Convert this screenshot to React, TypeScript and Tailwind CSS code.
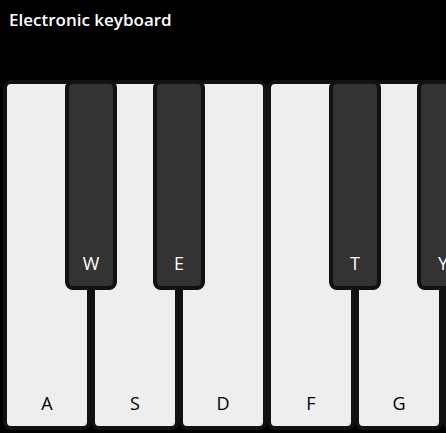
const whiteKeys = ["A", "S", "D", "F", "G", "H"];

const blackKeys = [
  { label: "W", left: "left-[62px]" },
  { label: "E", left: "left-[150px]" },
  { label: "T", left: "left-[326px]" },
  { label: "Y", left: "left-[414px]" },
];

export default function App() {
  return (
    <div className="w-[446px] h-[433px] overflow-hidden bg-black font-['Open_Sans',sans-serif]">
      {/* Header */}
      <div className="h-[80px] px-[9px] pt-[8px]">
        <h1 className="text-[17px] font-semibold text-white leading-[24px]">
          Electronic keyboard
        </h1>
      </div>

      {/* Keys */}
      <div className="relative ml-[3px] flex">
        {whiteKeys.map((key) => (
          <div
            key={key}
            className="shrink-0 w-[88px] h-[350px] border-4 border-[#111] rounded-lg bg-[#eee] flex items-end justify-center pb-[11px] text-[18px] leading-[24px] text-black"
          >
            {key}
          </div>
        ))}
        {blackKeys.map((key) => (
          <div
            key={key.label}
            className={`absolute top-0 ${key.left} w-[52px] h-[210px] border-4 border-[#111] rounded-lg bg-[#333] flex items-end justify-center pb-[11px] text-[18px] leading-[24px] text-white`}
          >
            {key.label}
          </div>
        ))}
      </div>
    </div>
  );
}
